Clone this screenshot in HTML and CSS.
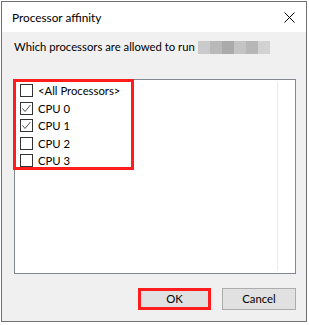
FILE: index.html
```html
<html>
	<head>
<link rel="stylesheet" href="styles.css">
	</head>
	<body>
		<div class="window">
			<div class="titlebar">
				<span class="title">Processor affinity</span>
				<svg class="close" width="11" height="11" viewBox="0 0 11 11"><path d="M0.5 0.5 L10.5 10.5 M10.5 0.5 L0.5 10.5" stroke="#000" stroke-width="1" fill="none"/></svg>
			</div>
			<div class="content">
				<div class="prompt">Which processors are allowed to run <span class="blur"><i class="b1"></i><i class="b2"></i><i class="b3"></i><i class="b4"></i><i class="b5"></i><i class="b6"></i></span></div>

				<div class="listbox">
					<div class="listarea">
						<div class="marked">
							<div class="row"><span class="check"></span>&lt;All Processors&gt;</div>
							<div class="row"><span class="check on"><svg width="11" height="11" viewBox="0 0 11 11"><path d="M1.5 5.5 L4 8.5 L9.5 2" stroke="#555" stroke-width="1" fill="none"/></svg></span>CPU 0</div>
							<div class="row"><span class="check on"><svg width="11" height="11" viewBox="0 0 11 11"><path d="M1.5 5.5 L4 8.5 L9.5 2" stroke="#555" stroke-width="1" fill="none"/></svg></span>CPU 1</div>
							<div class="row"><span class="check"></span>CPU 2</div>
							<div class="row"><span class="check"></span>CPU 3</div>
						</div>
					</div>
					<div class="listside"></div>
				</div>

				<div class="buttons">
					<div class="btn ok">OK</div>
					<div class="btn">Cancel</div>
				</div>
			</div>
		</div>
	</body>
</html>
```

FILE: styles.css
```css
body {
    margin: 0;
    background: #ffffff;
    font-family: Lato, "Liberation Sans", sans-serif;
    font-size: 11.3px;
    color: #000000;
}

.window {
    margin: 1px 0 0 1px;
    width: 304px;
    height: 319px;
    border: 1px solid #707070;
    background: #f0f0f0;
    display: flex;
    flex-direction: column;
}

.titlebar {
    height: 30px;
    background: #ffffff;
    display: flex;
    align-items: center;
    padding: 0 10px 0 10px;
}

.title {
    flex: 1;
    font-size: 11.8px;
}

.close {
    margin-right: 1px;
}

.content {
    flex: 1;
    padding: 7px 10px 0 12px;
    display: flex;
    flex-direction: column;
}

.prompt {
    line-height: 16px;
    height: 16px;
    display: flex;
    align-items: center;
}

.blur {
    display: flex;
    margin-left: 3px;
}

.blur i {
    display: block;
    width: 12px;
    height: 13px;
}

.b1 { background: #cacaca; }
.b2 { background: #b9b9b9; }
.b3 { background: #aaaaaa; }
.b4 { background: #c4c4c4; }
.b5 { background: #b7b7b7; }
.b6 { background: #d2d2d2; }

.listbox {
    margin-top: 24px;
    height: 193px;
    border: 1px solid #828790;
    background: #ffffff;
    display: flex;
}

.listarea {
    flex: 1;
}

.listside {
    width: 17px;
    margin: 2px 0 2px 0;
    border-left: 1px solid #e3ecf9;
}

.marked {
    margin: -1px 0 0 -2px;
    width: 121px;
    height: 91px;
    box-sizing: border-box;
    border: 3px solid #ff1d1d;
    padding: 0 0 0 4px;
}

.row {
    height: 17.5px;
    display: flex;
    align-items: center;
    white-space: nowrap;
}

.check {
    width: 11px;
    height: 11px;
    border: 1px solid #333333;
    background: #ffffff;
    margin-right: 5px;
    display: flex;
}

.buttons {
    margin-top: 14px;
    display: flex;
    justify-content: flex-end;
    gap: 11px;
}

.btn {
    width: 72px;
    height: 20px;
    line-height: 20px;
    text-align: center;
    background: #e1e1e1;
    border: 1px solid #adadad;
}

.ok {
    width: 67px;
    height: 16px;
    line-height: 16px;
    border: 3px solid #ff1d1d;
}
```
